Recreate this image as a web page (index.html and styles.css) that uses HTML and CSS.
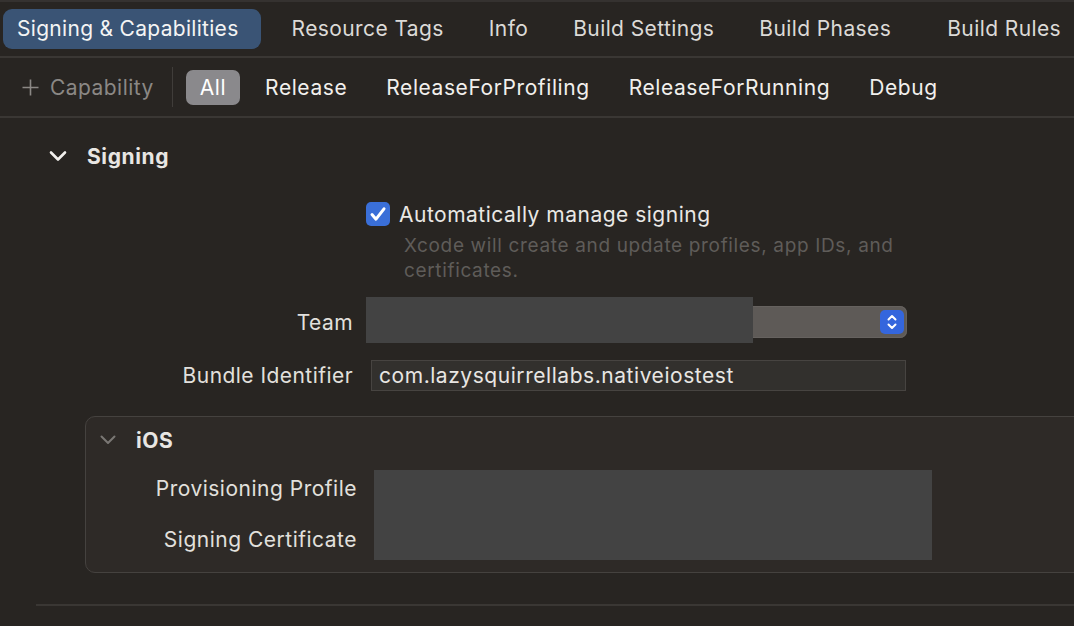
FILE: index.html
```html
<!DOCTYPE html>
<html>
<head>
<meta charset="utf-8">
<link rel="stylesheet" href="styles.css">
</head>
<body>
<div class="app">
  <nav class="tabbar">
    <div class="tab active">Signing &amp; Capabilities</div>
    <div class="tab">Resource Tags</div>
    <div class="tab">Info</div>
    <div class="tab">Build Settings</div>
    <div class="tab">Build Phases</div>
    <div class="tab last">Build Rules</div>
  </nav>
  <div class="filterbar">
    <div class="addcap">
      <svg class="plus" width="17" height="17" viewBox="0 0 17 17"><path d="M8.5 0.5v16M0.5 8.5h16" stroke="#8b8885" stroke-width="1.6" fill="none"/></svg>
      <span>Capability</span>
    </div>
    <div class="vsep"></div>
    <div class="pill active">All</div>
    <div class="pill">Release</div>
    <div class="pill">ReleaseForProfiling</div>
    <div class="pill">ReleaseForRunning</div>
    <div class="pill">Debug</div>
  </div>
  <main class="content">
    <section class="signing">
      <div class="section-head">
        <svg class="chev" width="18" height="12" viewBox="0 0 18 12"><path d="M2 2.5l7 7 7-7" stroke="#f2f0ed" stroke-width="2.6" fill="none" stroke-linecap="round" stroke-linejoin="round"/></svg>
        <span>Signing</span>
      </div>
      <div class="auto-row">
        <div class="checkbox">
          <svg width="24" height="24" viewBox="0 0 24 24"><path d="M6 12.6l4 4.6 8-10.4" stroke="#fff" stroke-width="3" fill="none" stroke-linecap="round" stroke-linejoin="round"/></svg>
        </div>
        <span class="auto-label">Automatically manage signing</span>
      </div>
      <div class="note">Xcode will create and update profiles, app IDs, and<br>certificates.</div>
      <div class="form-row team-row">
        <div class="label">Team</div>
        <div class="team-control">
          <div class="popup">
            <div class="stepper">
              <svg width="24" height="24" viewBox="0 0 24 24"><path d="M8.5 9.5l3.5-3.5 3.5 3.5M8.5 14.5l3.5 3.5 3.5-3.5" stroke="#fff" stroke-width="2" fill="none" stroke-linecap="round" stroke-linejoin="round"/></svg>
            </div>
          </div>
          <div class="redact team-redact"></div>
        </div>
      </div>
      <div class="form-row bundle-row">
        <div class="label">Bundle Identifier</div>
        <div class="field">com.lazysquirrellabs.nativeiostest</div>
      </div>
      <div class="platform">
        <div class="platform-head">
          <svg class="chev-small" width="16" height="10" viewBox="0 0 16 10"><path d="M1.5 1.5l6.5 6.5 6.5-6.5" stroke="#7a7774" stroke-width="2" fill="none" stroke-linecap="round" stroke-linejoin="round"/></svg>
          <span>iOS</span>
        </div>
        <div class="platform-body">
          <div class="plabels">
            <div class="plabel">Provisioning Profile</div>
            <div class="plabel">Signing Certificate</div>
          </div>
          <div class="redact profile-redact"></div>
        </div>
      </div>
    </section>
    <div class="bottom-sep"></div>
  </main>
</div>
</body>
</html>
```
FILE: styles.css
```css
html, body {
  margin: 0;
  padding: 0;
  background: #282522;
  overflow: hidden;
}
body {
  font-family: Inter, "Noto Sans", sans-serif;
  color: #e2e0dd;
  width: 1074px;
  height: 626px;
}
.app {
  width: 1074px;
  height: 626px;
  overflow: hidden;
  border-top: 2px solid #353230;
  box-sizing: border-box;
}
.tabbar {
  height: 54px;
  display: flex;
  align-items: center;
  padding-left: 3px;
  gap: 17px;
  border-bottom: 2px solid #3a3734;
  white-space: nowrap;
}
.tab {
  height: 40px;
  line-height: 40px;
  padding: 0 14px;
  border-radius: 9px;
  font-size: 21px;
  letter-spacing: 0.4px;
  color: #dcdad7;
}
.tab.active {
  background: #3a5475;
  color: #f4f4f4;
  letter-spacing: 0.3px;
  padding-right: 22px;
}
.tab.last {
  margin-left: 11px;
}
.filterbar {
  height: 58px;
  display: flex;
  align-items: center;
  border-bottom: 2px solid #3a3734;
  white-space: nowrap;
  font-size: 21px;
  letter-spacing: 0.58px;
}
.addcap {
  display: flex;
  align-items: center;
  gap: 11px;
  padding-left: 22px;
  color: #8b8885;
  letter-spacing: 0.45px;
}
.vsep {
  width: 1px;
  height: 40px;
  background: #403d3a;
  margin-left: 18px;
  margin-right: 13px;
}
.pill {
  height: 35px;
  line-height: 35px;
  padding: 0 14px;
  border-radius: 7px;
  color: #f2f0ed;
  margin-right: 11px;
}
.pill.active {
  background: #8a898c;
  color: #fff;
}
.content {
  padding-top: 26px;
}
.section-head {
  display: flex;
  align-items: center;
  height: 24px;
  margin-left: 49px;
  gap: 20px;
  font-size: 21px;
  letter-spacing: 0.6px;
  font-weight: 700;
  color: #e8e6e3;
}
.auto-row {
  display: flex;
  align-items: center;
  height: 24px;
  margin-top: 34px;
  margin-left: 366px;
  gap: 9px;
}
.checkbox {
  width: 24px;
  height: 24px;
  border-radius: 5px;
  background: #3a6fd8;
  display: flex;
}
.auto-label {
  font-size: 21px;
  letter-spacing: 0.5px;
  color: #eae8e5;
}
.note {
  margin-top: 7px;
  margin-left: 404px;
  font-size: 19px;
  line-height: 25px;
  color: #5f5c59;
  letter-spacing: 0.65px;
}
.form-row {
  display: flex;
  align-items: center;
}
.label {
  width: 353px;
  text-align: right;
  font-size: 21px;
  letter-spacing: 0.45px;
  color: #e2e0dd;
  flex: none;
}
.team-row {
  margin-top: 23px;
  height: 32px;
}
.team-control {
  position: relative;
  margin-left: 13px;
  width: 541px;
  height: 32px;
}
.popup {
  height: 32px;
  border-radius: 7px;
  background: #5e5a57;
  box-shadow: inset 0 0 0 1px #66625f;
  display: flex;
  justify-content: flex-end;
  align-items: center;
  padding-right: 3px;
}
.stepper {
  width: 24px;
  height: 24px;
  border-radius: 5px;
  background: #3466dd;
  display: flex;
}
.redact {
  background: #434343;
}
.team-redact {
  position: absolute;
  left: 0;
  top: -9px;
  width: 387px;
  height: 46px;
}
.bundle-row {
  margin-top: 22px;
  height: 31px;
}
.field {
  margin-left: 18px;
  width: 535px;
  height: 31px;
  box-sizing: border-box;
  border: 1px solid #474441;
  background: #32302d;
  font-size: 21px;
  letter-spacing: 0.55px;
  line-height: 29px;
  padding-left: 7px;
  color: #e8e6e3;
  white-space: nowrap;
}
.platform {
  margin-top: 25px;
  margin-left: 85px;
  margin-right: -20px;
  height: 157px;
  box-sizing: border-box;
  border: 1px solid #45423f;
  border-radius: 10px;
  background: #2e2a27;
  padding-top: 11px;
}
.platform-head {
  display: flex;
  align-items: center;
  height: 24px;
  padding-left: 14px;
  gap: 20px;
  font-size: 21px;
  letter-spacing: 0.6px;
  font-weight: 700;
  color: #e8e6e3;
}
.platform-body {
  display: flex;
  margin-top: 18px;
}
.plabels {
  width: 271px;
  display: flex;
  flex-direction: column;
  gap: 13px;
}
.plabel {
  height: 38px;
  line-height: 38px;
  text-align: right;
  font-size: 21px;
  letter-spacing: 0.5px;
  color: #e2e0dd;
}
.profile-redact {
  margin-left: 17px;
  width: 558px;
  height: 90px;
}
.bottom-sep {
  margin-top: 31px;
  margin-left: 36px;
  height: 2px;
  background: #3a3734;
}
```
